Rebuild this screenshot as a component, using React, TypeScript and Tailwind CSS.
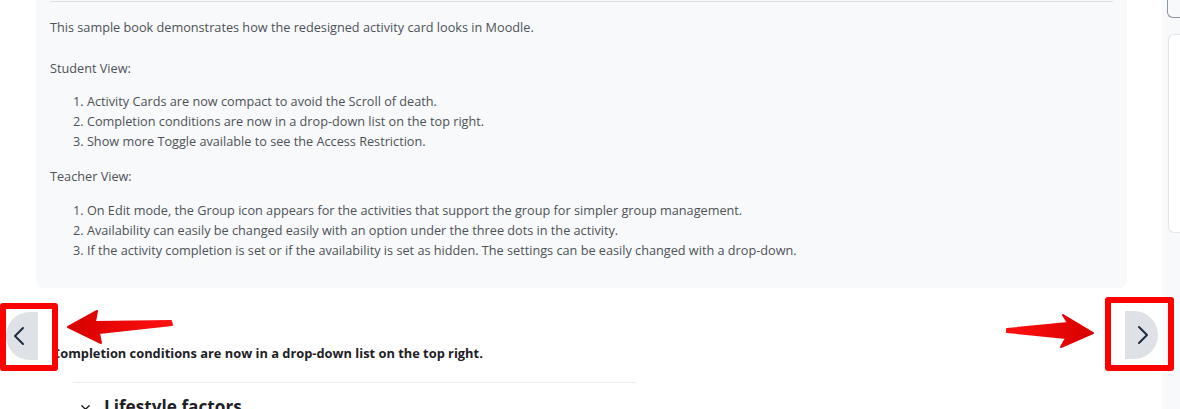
import React from 'react';

const studentItems = [
  'Activity Cards are now compact to avoid the Scroll of death.',
  'Completion conditions are now in a drop-down list on the top right.',
  'Show more Toggle available to see the Access Restriction.',
];

const teacherItems = [
  'On Edit mode, the Group icon appears for the activities that support the group for simpler group management.',
  'Availability can easily be changed easily with an option under the three dots in the activity.',
  'If the activity completion is set or if the availability is set as hidden. The settings can be easily changed with a drop-down.',
];

const font = { fontFamily: '"Open Sans", "Noto Sans", sans-serif' };

const List: React.FC<{ items: string[] }> = ({ items }) => (
  <ol className="pl-[23px]">
    {items.map((t, i) => (
      <li key={i} className="h-5 leading-5 whitespace-nowrap">
        {i + 1}. {t}
      </li>
    ))}
  </ol>
);

const Chevron: React.FC<{ dir: 'left' | 'right' }> = ({ dir }) => (
  <svg width="12" height="20" viewBox="0 0 12 20" fill="none" stroke="#1d2d3d" strokeWidth="2" strokeLinecap="round" strokeLinejoin="round">
    {dir === 'left' ? <path d="M10 2 2 10l8 8" /> : <path d="M2 2l8 8-8 8" />}
  </svg>
);

const App: React.FC = () => {
  return (
    <div className="relative w-[1180px] h-[409px] overflow-hidden bg-white flex text-[12.7px]" style={font}>
      <div className="w-[1162px] shrink-0">
        <div className="pl-[36px] pr-[35px]">
          <div className="bg-[#f8f9fa] rounded-b-lg px-[14px] pt-px pb-[28px] text-[#4d5258]">
            <div className="border-t border-[#dee2e6]" />
            <p className="mt-[15px] h-5 leading-5">
              This sample book demonstrates how the redesigned activity card looks in Moodle.
            </p>
            <p className="mt-[21px] h-5 leading-5">Student View:</p>
            <div className="mt-[13px]">
              <List items={studentItems} />
            </div>
            <p className="mt-[15px] h-5 leading-5">Teacher View:</p>
            <div className="mt-[14px]">
              <List items={teacherItems} />
            </div>
          </div>
        </div>

        <p className="mt-[55px] pl-[52px] h-5 leading-5 text-[12.85px] font-bold text-[#1d2125]">
          Completion conditions are now in a drop-down list on the top right.
        </p>
        <div className="ml-[73px] mt-[19px] w-[563px] border-t border-[#eeeeee]" />
        <div className="ml-[80px] mt-[12px] flex items-center gap-[13px]">
          <svg width="11" height="11" viewBox="0 0 12 12" fill="none" stroke="#1d2125" strokeWidth="1.5" strokeLinecap="round" strokeLinejoin="round">
            <path d="M2 4l4 4 4-4" />
          </svg>
          <span className="text-[17.2px] font-bold text-[#1d2125] leading-6">Lifestyle factors</span>
        </div>
      </div>

      <div className="flex-1 bg-[#f8f9fa] flex flex-col pl-[5px]">
        <div className="h-[18px] border border-t-0 border-r-0 border-[#8f959e] rounded-bl-md bg-[#f8f9fa]" />
        <div className="mt-[16px] ml-px h-[199px] bg-white border border-r-0 border-[#e3e6ea] rounded-l-md" />
      </div>

      {/* previous / next nav buttons */}
      <div className="absolute left-[6px] top-[312px] w-[32px] h-[48px] bg-[#dee2e6] rounded-l-full flex items-center justify-end pr-[13px]">
        <Chevron dir="left" />
      </div>
      <div className="absolute left-[1125px] top-[311px] w-[33px] h-[48px] bg-[#dee2e6] rounded-r-full flex items-center justify-start pl-[12px]">
        <Chevron dir="right" />
      </div>

      {/* annotation boxes */}
      <div className="absolute left-0 top-[303px] w-[58px] h-[68px] border-[6px] border-[#ff0000] rounded-[3px]" />
      <div className="absolute left-[1105px] top-[297px] w-[69px] h-[74px] border-[6px] border-[#ff0000] rounded-[3px]" />

      {/* annotation arrows */}
      <svg className="absolute left-0 top-0 pointer-events-none" width="1180" height="409">
        <defs>
          <linearGradient id="la" x1="0" y1="0" x2="1" y2="0">
            <stop offset="0" stopColor="#d60000" />
            <stop offset="1" stopColor="#ff1010" />
          </linearGradient>
          <linearGradient id="ra" x1="0" y1="0" x2="1" y2="0">
            <stop offset="0" stopColor="#ff1010" />
            <stop offset="1" stopColor="#d60000" />
          </linearGradient>
        </defs>
        <polygon points="68,327 97,311 95,322 171,321 172,325 99,333 101,343" fill="url(#la)" stroke="url(#la)" strokeWidth="2" strokeLinejoin="round" />
        <polygon points="1007,329 1068,323 1063,315 1093,333 1061,347 1066,338 1007,332" fill="url(#ra)" stroke="url(#ra)" strokeWidth="2" strokeLinejoin="round" />
      </svg>
    </div>
  );
};

export default App;
